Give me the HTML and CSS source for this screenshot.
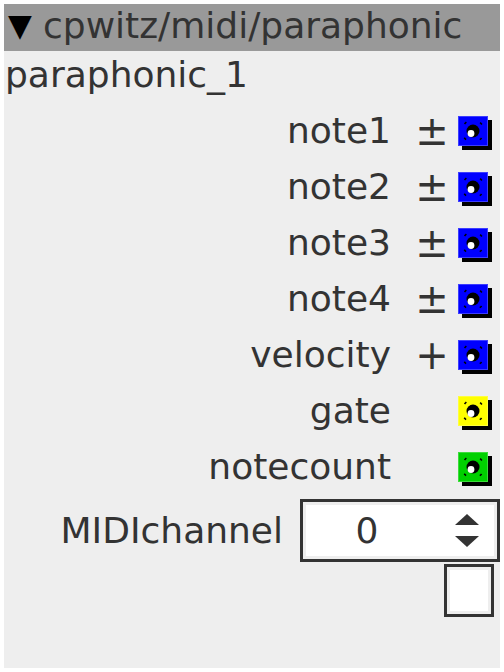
FILE: index.html
```html
<!DOCTYPE html>
<html lang="en">
<head>
    <meta charset="UTF-8">
    <meta name="viewport" content="width=device-width, initial-scale=1.0">
    <title>paraphonic</title>
    <link rel="stylesheet" href="styles.css">
</head>
<body>

    <div class="panel">
        <div class="header"><span class="arrow">&#9660;</span>cpwitz/midi/paraphonic</div>
        <div class="name">paraphonic_1</div>

        <div class="row">
            <span class="label">note1</span>
            <span class="sign">&plusmn;</span>
            <svg class="port" viewBox="0 0 36 36"><rect x="4" y="4" width="30" height="30" fill="#000"/><rect x="0.5" y="0.5" width="29" height="29" fill="#0000ff" stroke="#3c3cff"/><circle cx="15" cy="15" r="11" fill="none" stroke="#000" stroke-width="1.6" stroke-dasharray="2.5 14.77" stroke-dashoffset="-7.4"/><circle cx="15" cy="15" r="6.5" fill="#000"/><circle cx="13" cy="17.5" r="3.4" fill="#fff"/></svg>
        </div>
        <div class="row">
            <span class="label">note2</span>
            <span class="sign">&plusmn;</span>
            <svg class="port" viewBox="0 0 36 36"><rect x="4" y="4" width="30" height="30" fill="#000"/><rect x="0.5" y="0.5" width="29" height="29" fill="#0000ff" stroke="#3c3cff"/><circle cx="15" cy="15" r="11" fill="none" stroke="#000" stroke-width="1.6" stroke-dasharray="2.5 14.77" stroke-dashoffset="-7.4"/><circle cx="15" cy="15" r="6.5" fill="#000"/><circle cx="13" cy="17.5" r="3.4" fill="#fff"/></svg>
        </div>
        <div class="row">
            <span class="label">note3</span>
            <span class="sign">&plusmn;</span>
            <svg class="port" viewBox="0 0 36 36"><rect x="4" y="4" width="30" height="30" fill="#000"/><rect x="0.5" y="0.5" width="29" height="29" fill="#0000ff" stroke="#3c3cff"/><circle cx="15" cy="15" r="11" fill="none" stroke="#000" stroke-width="1.6" stroke-dasharray="2.5 14.77" stroke-dashoffset="-7.4"/><circle cx="15" cy="15" r="6.5" fill="#000"/><circle cx="13" cy="17.5" r="3.4" fill="#fff"/></svg>
        </div>
        <div class="row">
            <span class="label">note4</span>
            <span class="sign">&plusmn;</span>
            <svg class="port" viewBox="0 0 36 36"><rect x="4" y="4" width="30" height="30" fill="#000"/><rect x="0.5" y="0.5" width="29" height="29" fill="#0000ff" stroke="#3c3cff"/><circle cx="15" cy="15" r="11" fill="none" stroke="#000" stroke-width="1.6" stroke-dasharray="2.5 14.77" stroke-dashoffset="-7.4"/><circle cx="15" cy="15" r="6.5" fill="#000"/><circle cx="13" cy="17.5" r="3.4" fill="#fff"/></svg>
        </div>
        <div class="row">
            <span class="label">velocity</span>
            <span class="sign">+</span>
            <svg class="port" viewBox="0 0 36 36"><rect x="4" y="4" width="30" height="30" fill="#000"/><rect x="0.5" y="0.5" width="29" height="29" fill="#0000ff" stroke="#3c3cff"/><circle cx="15" cy="15" r="11" fill="none" stroke="#000" stroke-width="1.6" stroke-dasharray="2.5 14.77" stroke-dashoffset="-7.4"/><circle cx="15" cy="15" r="6.5" fill="#000"/><circle cx="13" cy="17.5" r="3.4" fill="#fff"/></svg>
        </div>
        <div class="row">
            <span class="label">gate</span>
            <span class="sign"></span>
            <svg class="port" viewBox="0 0 36 36"><rect x="4" y="4" width="30" height="30" fill="#000"/><rect x="0.5" y="0.5" width="29" height="29" fill="#ffff00" stroke="#ffff3c"/><circle cx="15" cy="15" r="11" fill="none" stroke="#000" stroke-width="1.6" stroke-dasharray="2.5 14.77" stroke-dashoffset="-7.4"/><circle cx="15" cy="15" r="6.5" fill="#000"/><circle cx="13" cy="17.5" r="3.4" fill="#fff"/></svg>
        </div>
        <div class="row">
            <span class="label">notecount</span>
            <span class="sign"></span>
            <svg class="port" viewBox="0 0 36 36"><rect x="4" y="4" width="30" height="30" fill="#000"/><rect x="0.5" y="0.5" width="29" height="29" fill="#00d000" stroke="#3cdc3c"/><circle cx="15" cy="15" r="11" fill="none" stroke="#000" stroke-width="1.6" stroke-dasharray="2.5 14.77" stroke-dashoffset="-7.4"/><circle cx="15" cy="15" r="6.5" fill="#000"/><circle cx="13" cy="17.5" r="3.4" fill="#fff"/></svg>
        </div>

        <div class="param">
            <span class="label">MIDIchannel</span>
            <div class="spin">
                <span class="value">0</span>
                <svg class="arrows" viewBox="0 0 26 36"><polygon points="13,1 25,12 1,12" fill="#333"/><polygon points="1,23 25,23 13,34" fill="#333"/></svg>
            </div>
        </div>
        <div class="check-row">
            <div class="check"></div>
        </div>
    </div>

</body>
</html>
```

FILE: styles.css
```css
body {
    margin: 0;
    padding: 4px;
    background: #ffffff;
    font-family: "DejaVu Sans", sans-serif;
    font-size: 36px;
    color: #333333;
}

.panel {
    width: 496px;
    height: 664px;
    background: #eeeeee;
}

.header {
    background: #999999;
    height: 47px;
    line-height: 42px;
    padding-left: 4px;
    white-space: nowrap;
}

.arrow {
    display: inline-block;
    width: 35px;
    color: #000000;
    font-size: 31px;
    vertical-align: 2px;
}

.name {
    height: 52px;
    line-height: 42px;
    padding-left: 1px;
    box-sizing: border-box;
    padding-top: 3px;
}

.row {
    display: flex;
    align-items: center;
    height: 56px;
    line-height: 42px;
}

.row .label {
    flex: 1;
    text-align: right;
}

.sign {
    width: 40px;
    margin-left: 21px;
    text-align: center;
    font-size: 40px;
    line-height: 42px;
}

.port {
    width: 36px;
    height: 36px;
    margin: 5px 6px 0 6px;
}

.param {
    display: flex;
    align-items: center;
    margin-top: 4px;
}

.param .label {
    flex: 1;
    text-align: right;
    margin-right: 17px;
}

.spin {
    width: 200px;
    height: 63px;
    box-sizing: border-box;
    border: 3px solid #333333;
    background: #ffffff;
    box-shadow: inset 0 0 0 3px #eeeeee;
    display: flex;
    align-items: center;
}

.value {
    width: 128px;
    text-align: center;
    line-height: 42px;
}

.arrows {
    width: 26px;
    height: 36px;
    margin-left: 23px;
}

.check-row {
    display: flex;
    justify-content: flex-end;
    padding-right: 6px;
    margin-top: 2px;
}

.check {
    width: 50px;
    height: 53px;
    box-sizing: border-box;
    border: 3px solid #333333;
    background: #ffffff;
    box-shadow: inset 0 0 0 3px #eeeeee;
}
```
